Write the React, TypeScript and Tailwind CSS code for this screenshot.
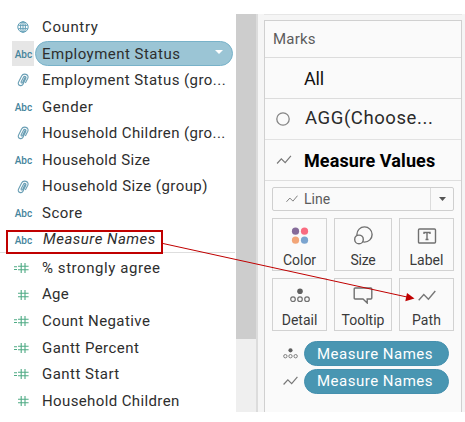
import React from "react";

type IconKind = "globe" | "abc" | "clip" | "num" | "calc";

function FieldIcon({ kind }: { kind: IconKind }) {
  if (kind === "abc")
    return <span className="mt-[2px] text-[10px] leading-none font-medium tracking-[-0.1px] text-[#45849c]">Abc</span>;
  if (kind === "globe")
    return (
      <svg width="12" height="12" viewBox="0 0 12 12" fill="none" stroke="#5f9db5" strokeWidth="1" className="mr-[3px]">
        <circle cx="6" cy="6" r="5.2" />
        <ellipse cx="6" cy="6" rx="2.4" ry="5.2" />
        <path d="M6 1v10M1.3 4.3h9.4M1.3 7.7h9.4" />
      </svg>
    );
  if (kind === "clip")
    return (
      <svg width="12" height="14" viewBox="0 0 12 14" fill="none" stroke="#6a9fb5" strokeWidth="1.1" strokeLinecap="round" className="mr-[3px]">
        <path d="M7.9 4.8 5.6 9.4C5 10.5 3.7 9.9 4.2 8.8L6.5 4.2C7.3 2.7 9.5 3.6 8.8 5.3L6 11.2C4.6 14 .2 12.2 1.5 9.2L4.6 3C6.3-.3 12.4 1.2 10.8 5.2L8.6 9.6" />
      </svg>
    );
  return (
    <svg width="16" height="12" viewBox="0 0 16 12" fill="none" stroke="#4fab85" strokeWidth="1.1" className="mr-[3px]">
      <path d="M8.2 1v10M12 1v10M5 4.2h10.6M5 7.8h10.6" />
      {kind === "calc" && <path d="M1 4.7h3M1 7.5h3" />}
    </svg>
  );
}

const dimensions: { kind: IconKind; label: string; text: string }[] = [
  { kind: "globe", label: "Country", text: "tracking-[0.62px]" },
  { kind: "abc", label: "Employment Status", text: "tracking-[0.48px]" },
  { kind: "clip", label: "Employment Status (gro...", text: "tracking-[0.45px]" },
  { kind: "abc", label: "Gender", text: "tracking-[0.6px]" },
  { kind: "clip", label: "Household Children (gro...", text: "tracking-[0.39px]" },
  { kind: "abc", label: "Household Size", text: "tracking-[0.33px]" },
  { kind: "clip", label: "Household Size (group)", text: "tracking-[0.43px]" },
  { kind: "abc", label: "Score", text: "tracking-[0.5px]" },
  { kind: "abc", label: "Measure Names", text: "pl-px italic tracking-[0.5px]" },
];

const measures: { kind: IconKind; label: string; text: string }[] = [
  { kind: "calc", label: "% strongly agree", text: "tracking-[0.56px]" },
  { kind: "num", label: "Age", text: "tracking-[0.3px]" },
  { kind: "calc", label: "Count Negative", text: "tracking-[0.42px]" },
  { kind: "calc", label: "Gantt Percent", text: "tracking-[0.45px]" },
  { kind: "calc", label: "Gantt Start", text: "tracking-[0.47px]" },
  { kind: "num", label: "Household Children", text: "tracking-[0.38px]" },
];

function FieldRow({ kind, label, text }: { kind: IconKind; label: string; text: string }) {
  const selected = label === "Employment Status";
  return (
    <div className="flex h-[26.55px] items-center pl-3">
      <div className={`flex h-[25px] w-[22px] shrink-0 items-center justify-end pr-[2px] ${selected ? "bg-[#e6e6e6]" : ""}`}>
        <FieldIcon kind={kind} />
      </div>
      <div
        className={`ml-px flex h-[25px] w-[198px] items-center justify-between rounded-full border pr-[9px] pl-[6px] ${
          selected ? "border-[#78b2c9] bg-[#9bc5d5]" : "border-transparent"
        }`}
      >
        <span className={`text-[15px] whitespace-nowrap text-[#2e2e2e] ${text}`}>{label}</span>
        {selected && (
          <svg width="8" height="4" viewBox="0 0 8 4" className="mb-[3px]">
            <path d="M0 0h8L4 4z" fill="#fff" />
          </svg>
        )}
      </div>
    </div>
  );
}

function LineIcon({ width, height }: { width: number; height: number }) {
  return (
    <svg width={width} height={height} viewBox="0 0 18 12" fill="none" stroke="#777" strokeWidth="1.4">
      <path d="M.7 10.2 5.8 4.6 10.4 9.2 17.3 1" />
    </svg>
  );
}

function DetailIcon({ width, height }: { width: number; height: number }) {
  return (
    <svg width={width} height={height} viewBox="0 0 20 15" fill="none" stroke="#707070" strokeWidth="1.2">
      <circle cx="10" cy="3.2" r="2.8" fill="#606060" stroke="none" />
      <circle cx="3" cy="11.2" r="2.3" />
      <circle cx="10" cy="11.2" r="2.3" />
      <circle cx="17" cy="11.2" r="2.3" />
    </svg>
  );
}

function CardButton({ label, text, children }: { label: string; text: string; children: React.ReactNode }) {
  return (
    <div className="flex h-[53px] flex-col items-center border border-[#d2d2d2] bg-[#fafafa]">
      <div className="flex h-[33px] items-center justify-center">{children}</div>
      <span className={`text-[14px] leading-[17px] text-[#3a3a3a] ${text}`}>{label}</span>
    </div>
  );
}

function Pill({ children }: { children: React.ReactNode }) {
  return (
    <div className="flex h-[27.5px] items-center pl-[10px]">
      <div className="flex w-[29px] items-center pl-[8px]">{children}</div>
      <div className="flex h-[25px] w-[145px] items-center rounded-full border border-[#4590ae] bg-[#4996b2] pl-[12px]">
        <span className="text-[15px] tracking-[0.5px] whitespace-nowrap text-white">Measure Names</span>
      </div>
    </div>
  );
}

export default function App() {
  return (
    <div className="relative flex h-[422px] w-[465px] overflow-hidden bg-white pt-[14px] pb-[10px] font-['Roboto',sans-serif]">
      <div className="w-[236px] shrink-0">
        {dimensions.map((f) => (
          <FieldRow key={f.label} {...f} />
        ))}
        <div className="mt-[-1px] mr-px mb-[2px] h-px bg-[#dedede]" />
        {measures.map((f) => (
          <FieldRow key={f.label} {...f} />
        ))}
      </div>

      <div className="h-[398px] w-[20px] shrink-0 bg-[#efefef]">
        <div className="h-[325px] bg-[#cdcdcd]" />
      </div>

      <div className="h-[398px] w-[209px] border-l-2 border-[#dcdcdc] bg-[#f5f5f5] pr-[3px] pl-[6px]">
        <div className="mb-[5px] h-px bg-[#e6e6e6]" />
        <div className="h-[392px] border border-b-0 border-[#d0d0d0] bg-[#fafafa]">
          <div className="flex h-[37px] items-center border-b border-[#dcdcdc] pl-[8px] text-[15px] tracking-[0.2px] text-[#5c5c5c]">Marks</div>
          <div className="flex h-[41px] items-center border-b border-[#dcdcdc] pl-[39px] text-[18px] tracking-[-0.2px] text-[#111]">All</div>
          <div className="flex h-[41px] items-center border-b border-[#e2e2e2] pl-[11px]">
            <svg width="14" height="14" viewBox="0 0 14 14" className="mr-[15px]">
              <circle cx="7" cy="7" r="6.2" fill="none" stroke="#858585" strokeWidth="1.3" />
            </svg>
            <span className="text-[18.5px] tracking-[0.58px] text-[#2a2a2a]">AGG(Choose...</span>
          </div>
          <div className="flex h-[41px] items-center border-b border-[#dedede] pl-[11px]">
            <LineIcon width={16} height={10} />
            <span className="ml-[12px] text-[18px] font-bold tracking-[0.1px] text-black">Measure Values</span>
          </div>
          <div className="mt-[6px] ml-[7px] flex h-[24px] w-[182px] items-center rounded-[2px] border border-[#cfcfcf]">
            <div className="flex flex-1 items-center pl-[13px]">
              <LineIcon width={12} height={8} />
              <span className="ml-[6px] text-[14px] text-[#5c5c5c]">Line</span>
            </div>
            <div className="flex h-full w-[23px] items-center justify-center border-l border-[#dcdcdc]">
              <svg width="7" height="4" viewBox="0 0 7 4">
                <path d="M0 0h7L3.5 4z" fill="#555" />
              </svg>
            </div>
          </div>
          <div className="mt-[7px] ml-[7px] grid w-[182px] grid-cols-[55px_58px_55px] gap-[7px]">
            <CardButton label="Color" text="tracking-[0px]">
              <svg width="18" height="18" viewBox="0 0 18 18">
                <circle cx="4.5" cy="4.2" r="3.6" fill="#856b99" />
                <circle cx="13.5" cy="4.2" r="3.6" fill="#fa6b80" />
                <circle cx="4.5" cy="13.2" r="3.6" fill="#f2a577" />
                <circle cx="13.5" cy="13.2" r="3.6" fill="#7ba4cf" />
              </svg>
            </CardButton>
            <CardButton label="Size" text="tracking-[-0.2px]">
              <svg width="20" height="19" viewBox="0 0 20 19" fill="none" stroke="#707070" strokeWidth="1.4">
                <circle cx="11.5" cy="8.5" r="7.6" />
                <circle cx="6" cy="13.4" r="4.3" fill="#fafafa" />
              </svg>
            </CardButton>
            <CardButton label="Label" text="tracking-[0px]">
              <svg width="20" height="16" viewBox="0 0 20 16" fill="none" stroke="#707070" strokeWidth="1.4">
                <rect x="1.5" y="1" width="17" height="14" rx="1" />
                <path d="M7 6V4.5h6V6M10 4.5v7M8.5 11.5h3" />
              </svg>
            </CardButton>
            <CardButton label="Detail" text="tracking-[0px]">
              <DetailIcon width={20} height={15} />
            </CardButton>
            <CardButton label="Tooltip" text="tracking-[0px]">
              <svg width="20" height="17" viewBox="0 0 20 17" fill="none" stroke="#707070" strokeWidth="1.4">
                <path d="M2.2 1h15.6q1 0 1 1v9q0 1-1 1H14.2v4L10 12H2.2q-1 0-1-1V2q0-1 1-1z" />
              </svg>
            </CardButton>
            <CardButton label="Path" text="tracking-[0.1px]">
              <LineIcon width={18} height={12} />
            </CardButton>
          </div>
          <div className="mt-[9px]">
            <Pill>
              <DetailIcon width={15} height={11} />
            </Pill>
            <Pill>
              <LineIcon width={15} height={10} />
            </Pill>
          </div>
        </div>
      </div>

      <div className="pointer-events-none absolute top-[230px] left-[6px] h-[24px] w-[157px] border-2 border-[#c00000]" />
      <svg width="465" height="422" viewBox="0 0 465 422" className="pointer-events-none absolute top-0 left-0">
        <path d="M163 243.5 407 297" stroke="#c00000" strokeWidth="1" />
        <path d="M414.5 298.5 405.3 301.2 407 293z" fill="#c00000" />
      </svg>
    </div>
  );
}
